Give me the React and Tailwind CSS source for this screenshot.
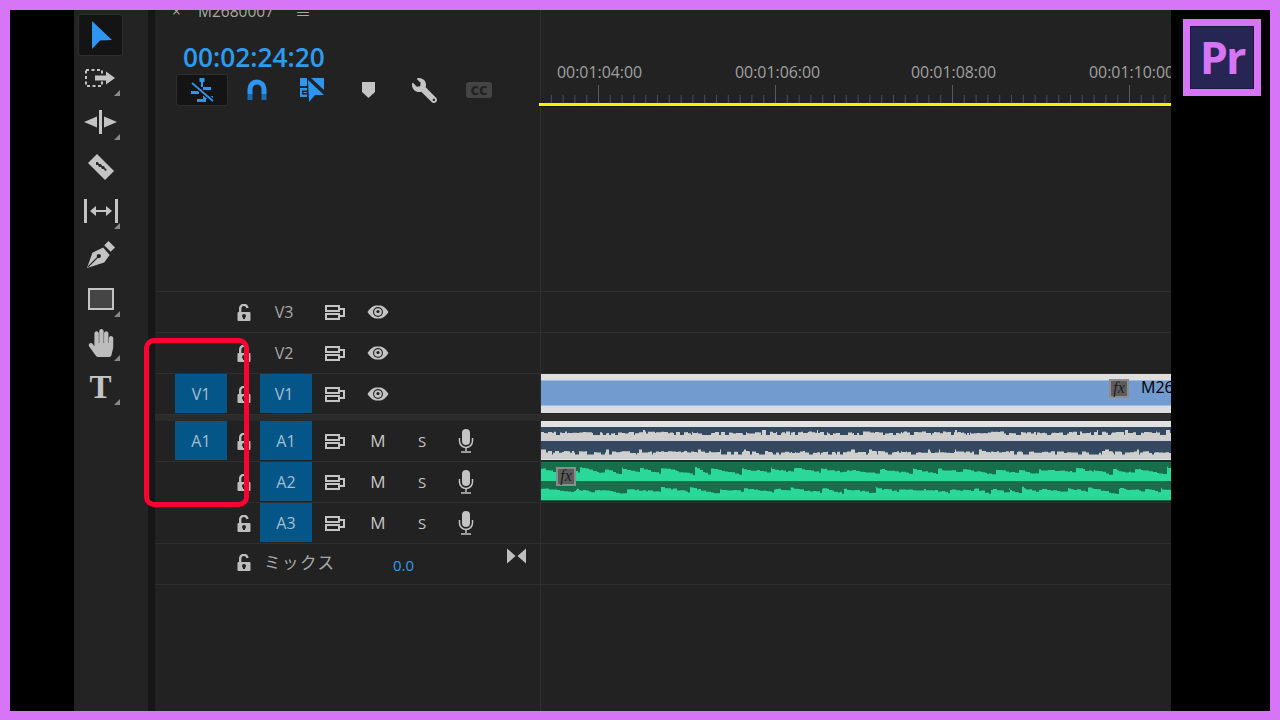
import { FaHandPaper, FaWrench } from 'react-icons/fa'

const FONT = { fontFamily: '"Open Sans", "Noto Sans CJK JP", sans-serif' }

// simple seeded random so the wave form is the same on each load
const makeRandom = (seed) => {
  let s = seed
  return () => {
    s = (s * 9301 + 49297) % 233280
    return s / 233280
  }
}

// spiky line for the quiet gray audio clip
const flatWave = (seed, width, base, top, range) => {
  const rnd = makeRandom(seed)
  let d = `M0 ${base}`
  let x = 0
  while (x < width) {
    const step = 1 + Math.floor(rnd() * 4)
    const r = rnd()
    const y = top + (r > 0.94 ? -1.500 : r < 0.2 ? range + 1.500 : rnd() * range)
    d += `V${y.toFixed(1)}H${x + step}`
    x += step
  }
  return `${d}V${base}Z`
}

// saw shaped wave: jumps up, then falls off until the next hit
const sawWave = (seed, width, base, high, low) => {
  const rnd = makeRandom(seed)
  let d = `M0 ${base}`
  let x = 0
  while (x < width) {
    const period = 14 + Math.floor(rnd() * 22)
    const peak = high + rnd() * (low - high) * 0.4
    const end = low - rnd() * 3
    for (let c = 0; c < period; ) {
      const step = 2 + Math.floor(rnd() * 3)
      const y = peak + (end - peak) * (c / period) + (rnd() - 0.5) * 1.600
      d += `V${y.toFixed(1)}H${x + c + step}`
      c += step
    }
    x += period
  }
  return `${d}V${base}Z`
}

const Corner = () => (
  <span className="absolute right-[3px] bottom-[4px] w-0 h-0 border-l-[6px] border-l-transparent border-b-[6px] border-b-[#8a8a8a]"></span>
)

const Tool = ({ children, corner, active }) => (
  <div className={`relative w-[45px] flex items-center justify-center ${active ? 'bg-[#141414] border border-[#2e2e2e] rounded-[3px] h-[42px]' : 'h-[44px]'}`}>
    {children}
    {corner && <Corner />}
  </div>
)

const Toolbar = () => (
  <div className="w-[74px] shrink-0 bg-[#232323] flex flex-col pt-[4px] pl-[4px] text-[#bdbdbd]">
    <Tool active>
      <svg className="ml-[3px]" width="22" height="30" viewBox="0 0 22 30"><path d="M1 1 L21 20 L9 20.500 L1 29 Z" fill="#2d96f3" /></svg>
    </Tool>
    <Tool corner>
      <svg width="32" height="18" viewBox="0 0 32 18" fill="none">
        <rect x="1" y="1" width="16" height="16" stroke="#c4c4c4" strokeWidth="2" strokeDasharray="3 2.500" />
        <path d="M10 6.500H21V2.500L30 9L21 15.500V11.500H10Z" fill="#c4c4c4" />
      </svg>
    </Tool>
    <Tool corner>
      <svg width="33" height="24" viewBox="0 0 33 24" fill="#c4c4c4">
        <rect x="15" y="0" width="3" height="24" />
        <path d="M0 12L13 6.500V17.500Z" />
        <path d="M33 12L20 6.500V17.500Z" />
      </svg>
    </Tool>
    <div className="h-[1px]"></div>
    <Tool>
      <svg width="28" height="28" viewBox="0 0 28 28">
        <path d="M10 1L27 18L18 27L1 10Z" fill="#c4c4c4" />
        <path d="M9 9l2 0l1 2l2 0l1 2l2 0l1 2l2 2l-2 1l-1-2l-2 0l-1-2l-2 0l-1-2l-2 0z" fill="#2b2b2b" />
      </svg>
    </Tool>
    <Tool corner>
      <svg width="34" height="24" viewBox="0 0 34 24" fill="#c4c4c4">
        <rect x="0" y="0" width="3" height="24" />
        <rect x="31" y="0" width="3" height="24" />
        <path d="M6 12L12 7V11H22V7L28 12L22 17V13H12V17Z" />
      </svg>
    </Tool>
    <Tool>
      <svg width="28" height="28" viewBox="0 0 26 26">
        <path d="M16 4L20 0L26 6L22 10Z" fill="#c4c4c4" />
        <path d="M0 25L5 11L15 6L21 13L16 20Z" fill="#c4c4c4" />
        <path d="M1 24L10 15" stroke="#232323" strokeWidth="1.200" />
        <circle cx="11" cy="14" r="2" fill="#232323" />
      </svg>
    </Tool>
    <Tool corner>
      <div className="w-[26px] h-[22px] bg-[#454545] border-2 border-[#c4c4c4]"></div>
    </Tool>
    <Tool corner>
      <FaHandPaper className="w-[30px] h-[28px] text-[#bdbdbd]" />
    </Tool>
    <Tool corner>
      <span className="text-[33px] leading-none font-bold text-[#c4c4c4]" style={{ fontFamily: '"Liberation Serif", serif' }}>T</span>
    </Tool>
  </div>
)

const SnapIcon = () => (
  <svg width="26" height="25" viewBox="0 0 26 25" fill="#2d96f3">
    <rect x="12" y="1" width="2" height="8" />
    <rect x="10.500" y="0" width="5" height="4" />
    <rect x="14" y="9" width="8" height="3" />
    <rect x="2" y="13" width="8" height="3" />
    <rect x="14" y="18" width="10" height="3" />
    <rect x="8" y="21" width="9" height="3" />
    <path d="M3 5L24 23" stroke="#141414" strokeWidth="4.500" />
    <path d="M3 5L24 23" stroke="#2d96f3" strokeWidth="1.800" />
  </svg>
)

const MagnetIcon = () => (
  <svg width="20" height="22" viewBox="0 0 20 22" fill="none">
    <path d="M3 15V10A7 7 0 0 1 17 10V15" stroke="#2d96f3" strokeWidth="5" />
    <path d="M3 15V21M17 15V21" stroke="#1c6bb0" strokeWidth="5" />
  </svg>
)

const LinkedIcon = () => (
  <svg width="25" height="24" viewBox="0 0 25 24" fill="#2d96f3">
    <rect x="0" y="0" width="7" height="8" />
    <path d="M0 10H7V19H0ZM2 12.500V16.500H7V15H3.500V14H7V12.500Z" fillRule="evenodd" />
    <path d="M8 2L24 17L15 17L9 24Z" />
    <path d="M11 0H24V12Z" />
  </svg>
)

const MarkerIcon = () => (
  <svg width="13" height="16" viewBox="0 0 13 16"><path d="M0 0H13V10L6.500 16L0 10Z" fill="#c4c4c4" /></svg>
)

const TopBar = () => (
  <div className="h-[282px] flex border-b border-[#2f2f2f]">
    <div className="w-[385px] shrink-0">
      <div className="h-[3px] flex items-center pl-[17px] text-[#a8a8a8] text-[15.500px]">
        <span className="w-[26px]">×</span>
        <span className="w-[97px]">M2680007</span>
        <span className="text-[16px]">≡</span>
      </div>
      <div className="pl-[28px] pt-[28px] text-[26.300px] leading-[32px] font-semibold text-[#2d9cf0]">00:02:24:20</div>
      <div className="flex items-center h-[32px] mt-[1px] ml-[21px]">
        <div className="w-[52px] h-[32px] bg-[#141414] border border-[#2e2e2e] rounded-[3px] flex items-center justify-center"><SnapIcon /></div>
        <div className="w-[56px] flex justify-center pl-[2px]"><MagnetIcon /></div>
        <div className="w-[55px] flex justify-center pl-[2px]"><LinkedIcon /></div>
        <div className="w-[56px] flex justify-center pl-[3px]"><MarkerIcon /></div>
        <div className="w-[55px] flex justify-center pl-[3px]"><FaWrench className="w-[25px] h-[25px] text-[#c4c4c4] -scale-x-100" /></div>
        <div className="w-[56px] flex justify-center pl-[2px]">
          <span className="w-[26px] h-[16px] bg-[#444444] rounded-[3px] text-[#222222] text-[13px] leading-[16px] font-extrabold text-center">CC</span>
        </div>
      </div>
    </div>
    <Ruler />
  </div>
)

const Ruler = () => {
  const ticks = []
  for (let i = -4; i < 55; i++) {
    const x = 57 + i * 11.800
    ticks.push(<rect key={i} x={x} y={i % 15 === 0 ? 0 : 10} width="1" height={i % 15 === 0 ? 18 : 8} fill={i % 15 === 0 ? '#5a5a5a' : '#4f4f4f'} />)
  }
  return (
    <div className="flex-1 min-w-0 border-l border-[#2f2f2f]">
      <div className="flex h-[50px] pl-[16px] pt-[51px] text-[#a0a0a0] text-[15.900px] leading-[22px] whitespace-nowrap">
        <span className="w-[178px] shrink-0">00:01:04:00</span>
        <span className="w-[176px] shrink-0">00:01:06:00</span>
        <span className="w-[178px] shrink-0">00:01:08:00</span>
        <span className="shrink-0">00:01:10:00</span>
      </div>
      <svg className="block mt-[24px]" width="632" height="18" viewBox="0 0 632 18">{ticks}</svg>
      <div className="h-[4px] bg-[#fbf000] border-b border-[#15152a] -ml-[2px]"></div>
    </div>
  )
}

const LockIcon = () => (
  <svg width="14" height="17" viewBox="0 0 14 17">
    <path d="M3.200 9V5A3.500 3.500 0 0 1 10.500 4" fill="none" stroke="#bdbdbd" strokeWidth="2.400" />
    <rect x="0.500" y="8" width="13" height="9" rx="1" fill="#bdbdbd" />
    <circle cx="7" cy="12" r="2" fill="#222222" />
    <rect x="6" y="12" width="2" height="3" fill="#222222" />
  </svg>
)

const OutputIcon = () => (
  <svg className="ml-[2px]" width="20" height="15" viewBox="0 0 20 15" fill="none" stroke="#c4c4c4" strokeWidth="2">
    <rect x="1" y="1" width="13" height="5" />
    <rect x="1" y="9" width="13" height="5" />
    <path d="M14 4H19V11H14" />
  </svg>
)

const EyeIcon = () => (
  <svg width="22" height="14" viewBox="0 0 22 14">
    <path d="M0.500 7C5 0.500 8 0.500 11 0.500S17 0.500 21.500 7C17 13.500 14 13.500 11 13.500S5 13.500 0.500 7Z" fill="#c4c4c4" />
    <circle cx="11" cy="7" r="5" fill="#2a2a2a" />
    <circle cx="11" cy="7" r="3.800" fill="#c4c4c4" />
    <circle cx="11" cy="6.500" r="1.600" fill="#222222" />
  </svg>
)

const MicIcon = () => (
  <svg width="16" height="24" viewBox="0 0 16 24" fill="none" stroke="#c4c4c4">
    <rect x="4" y="0" width="8" height="16" rx="4" fill="#c4c4c4" stroke="none" />
    <path d="M1.500 9V12A6.500 6.500 0 0 0 14.500 12V9" strokeWidth="1.500" />
    <path d="M8 18.500V22M3 23H13" strokeWidth="1.500" />
  </svg>
)

const Source = ({ label, shift }) => (
  <div className={`w-[52px] h-[39px] shrink-0 self-start bg-[#045688] text-[#a3bfd2] text-[16px] flex items-center justify-center font-medium ${shift ? 'pr-[4px]' : ''}`}>{label}</div>
)

const TrackHead = ({ source, target, label, audio }) => (
  <div className="w-[385px] shrink-0 h-full flex items-center pl-[20px] text-[#a8a8a8]">
    <div className="w-[52px] shrink-0 self-start">{source && <Source label={source} />}</div>
    <div className="w-[33px] flex justify-center"><LockIcon /></div>
    {target ? <Source label={target} shift={!audio} /> : <div className="w-[52px] pr-[4px] text-center text-[16px]">{label}</div>}
    <div className="w-[44px] flex justify-center"><OutputIcon /></div>
    {audio ? (
      <>
        <div className="w-[44px] text-center text-[17px] opacity-95 text-[#d0d0d0]">M</div>
        <div className="w-[44px] text-center text-[15px] opacity-95 text-[#d0d0d0]">S</div>
        <div className="w-[44px] flex justify-center"><MicIcon /></div>
      </>
    ) : (
      <div className="w-[44px] flex justify-center"><EyeIcon /></div>
    )}
  </div>
)

const FxBadge = () => (
  <span className="w-[20px] h-[19px] shrink-0 bg-[#5c5c5c] border-2 border-[#8c8c8c] text-[#1c1c1c] text-[16px] leading-[14px] italic text-center" style={{ fontFamily: '"Liberation Serif", serif' }}>fx</span>
)

const Row = ({ head, children }) => (
  <div className="h-[41px] flex border-b border-[#2f2f2f]">
    {head}
    <div className="flex-1 min-w-0 border-l border-[#2f2f2f] overflow-hidden">{children}</div>
  </div>
)

const VideoClip = () => (
  <div className="h-[39px] bg-[#dedede] flex flex-col pt-[6px] pb-[7px]">
    <div className="flex-1 bg-[#729bcf] border-y border-[#9dbce4] flex items-center justify-end">
      <div className="flex items-center gap-[12px] w-[62px] -mt-[10px] shrink-0">
        <FxBadge />
        <span className="text-black text-[16px] font-medium whitespace-nowrap -mt-[2px]">M26</span>
      </div>
    </div>
  </div>
)

const AudioClipGray = () => (
  <svg className="block" width="630" height="39" viewBox="0 0 630 39">
    <rect width="630" height="39" fill="#e2e2e2" />
    <rect y="6" width="630" height="14" fill="#34495f" />
    <path d={flatWave(11, 630, 20, 10.500, 2)} fill="#cfcfcf" />
    <rect y="20" width="630" height="18" fill="#34495f" />
    <path d={flatWave(29, 630, 38, 30, 2)} fill="#cfcfcf" />
  </svg>
)

const AudioClipGreen = () => (
  <div className="h-[39px] relative">
    <svg className="block" width="630" height="39" viewBox="0 0 630 39">
      <rect width="630" height="39" fill="#186d4a" />
      <path d={sawWave(7, 630, 19, 5, 13)} fill="#2ad89a" />
      <path d={sawWave(43, 630, 38, 25, 32)} fill="#2ad89a" />
    </svg>
    <div className="absolute left-[15px] top-[5px] flex"><FxBadge /></div>
  </div>
)

const MixHead = () => (
  <div className="w-[385px] shrink-0 flex pl-[20px]">
    <div className="w-[52px]"></div>
    <div className="w-[33px] flex justify-center pt-[10px] h-fit"><LockIcon /></div>
    <div className="w-[4px]"></div>
    <span className="w-[129px] pt-[8px] text-[16.500px] text-[#a8a8a8] tracking-[1.500px] leading-[22px]">ミックス</span>
    <span className="w-[114px] pt-[11px] text-[15px] text-[#2d9cf0] leading-[20px]">0.0</span>
    <div className="pt-[4px]">
      <svg width="19" height="16" viewBox="0 0 20 16" fill="#bdbdbd"><path d="M0 0L9 8L0 16ZM20 0L11 8L20 16Z" /></svg>
    </div>
  </div>
)

const Logo = () => (
  <div className="w-[78px] h-[77px] bg-[#d675f5] p-[7px]">
    <div className="w-full h-full bg-[#272553] border border-[#1c1a3c] flex items-center justify-center text-[#d675f5] text-[45px] font-bold leading-none tracking-[-2px] pb-[2px]">Pr</div>
  </div>
)

export default function App() {
  return (
    <div className="w-[1280px] h-[720px] border-[10px] border-b-[9px] border-[#d675f5] bg-black flex overflow-hidden" style={FONT}>
      <div className="w-[64px] shrink-0"></div>
      <div className="relative w-[1097px] shrink-0 h-full flex bg-[#222222] overflow-hidden">
        <Toolbar />
        <div className="w-[7px] shrink-0 bg-[#161616]"></div>
        <div className="flex-1 min-w-0 flex flex-col">
          <TopBar />
          <Row head={<TrackHead label="V3" />} />
          <Row head={<TrackHead label="V2" />} />
          <Row head={<TrackHead source="V1" target="V1" />}><VideoClip /></Row>
          <div className="h-[6px] bg-[#2b2b2b]"></div>
          <Row head={<TrackHead source="A1" target="A1" audio />}><AudioClipGray /></Row>
          <Row head={<TrackHead target="A2" audio />}><AudioClipGreen /></Row>
          <Row head={<TrackHead target="A3" audio />} />
          <Row head={<MixHead />} />
          <div className="flex-1 flex">
            <div className="w-[385px] shrink-0"></div>
            <div className="border-l border-[#2f2f2f]"></div>
          </div>
        </div>
        {/* red highlight over the source patch column */}
        <div className="absolute left-[70px] top-[328px] w-[105px] h-[169px] border-[5px] border-[#ff0033] rounded-[10px]"></div>
      </div>
      <div className="flex-1 pl-[12px] pt-[9px]"><Logo /></div>
    </div>
  )
}
